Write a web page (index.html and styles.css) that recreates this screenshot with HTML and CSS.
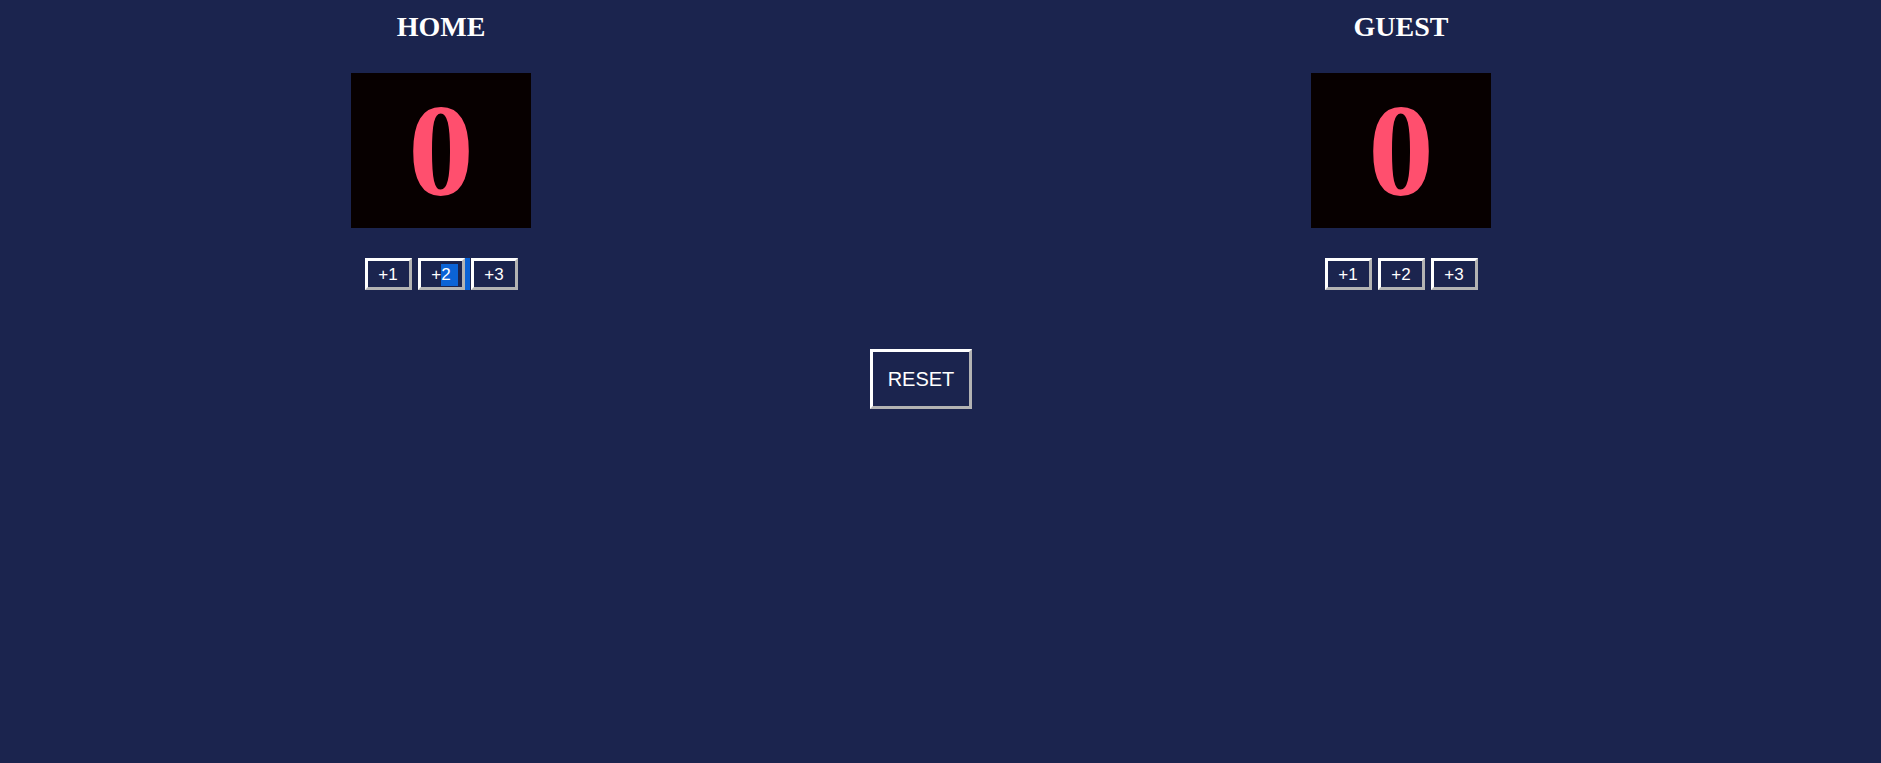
FILE: index.html
```html
<!DOCTYPE html>
<html lang="en">
<head>
<meta charset="utf-8">
<title>Scoreboard</title>
<link rel="stylesheet" href="styles.css">
</head>
<body>
<main class="board">
  <section class="team">
    <h2 class="team-name">HOME</h2>
    <div class="score">0</div>
    <div class="controls controls-sel">
      <button class="btn">+1</button>
      <button class="btn">+<span class="sel">2</span></button>
      <button class="btn">+3</button>
    </div>
  </section>
  <section class="team">
    <h2 class="team-name">GUEST</h2>
    <div class="score">0</div>
    <div class="controls">
      <button class="btn">+1</button>
      <button class="btn">+2</button>
      <button class="btn">+3</button>
    </div>
  </section>
</main>
<div class="reset-row">
  <button class="reset">RESET</button>
</div>
</body>
</html>
```
FILE: styles.css
```css
html, body {
  margin: 0;
  padding: 0;
  background: #1b244e;
  height: 100%;
}
body {
  font-family: "Liberation Serif", "Times New Roman", serif;
  color: #ffffff;
}
.board {
  display: grid;
  grid-template-columns: 480px 480px;
  column-gap: 480px;
  padding-left: 201px;
}
.team {
  display: flex;
  flex-direction: column;
  align-items: center;
}
.team-name {
  margin: 13px 0 0;
  font-size: 28px;
  line-height: 28px;
  font-weight: bold;
}
.score {
  margin-top: 32px;
  width: 180px;
  height: 155px;
  background: #070000;
  color: #ff4f6e;
  font-size: 131px;
  font-weight: bold;
  display: flex;
  align-items: center;
  justify-content: center;
  line-height: 1;
}
.controls {
  position: relative;
  margin-top: 30px;
  display: flex;
  gap: 6px;
}
.controls-sel::after {
  content: "";
  position: absolute;
  left: 100px;
  top: 0;
  bottom: 0;
  width: 5px;
  background: #0b63d6;
}
.btn {
  box-sizing: border-box;
  width: 47px;
  height: 32px;
  padding: 1px 0 0;
  background: #1b244e;
  color: #ffffff;
  font-family: "Liberation Sans", Arial, sans-serif;
  font-size: 17px;
  border-style: solid;
  border-width: 3px;
  border-color: #ffffff #b3b3b3 #b3b3b3 #ffffff;
  display: flex;
  align-items: center;
  justify-content: center;
}
.sel {
  background: #0b63d6;
  padding: 1px 7px 1px 0;
  margin-right: -7px;
}
.reset-row {
  width: 1440px;
  margin-left: 201px;
  display: flex;
  justify-content: center;
  padding-top: 59px;
}
.reset {
  box-sizing: border-box;
  width: 102px;
  height: 60px;
  padding: 0;
  background: #1b244e;
  color: #ffffff;
  font-family: "Liberation Sans", Arial, sans-serif;
  font-size: 20px;
  border-style: solid;
  border-width: 3px;
  border-color: #ffffff #b3b3b3 #b3b3b3 #ffffff;
}
```
